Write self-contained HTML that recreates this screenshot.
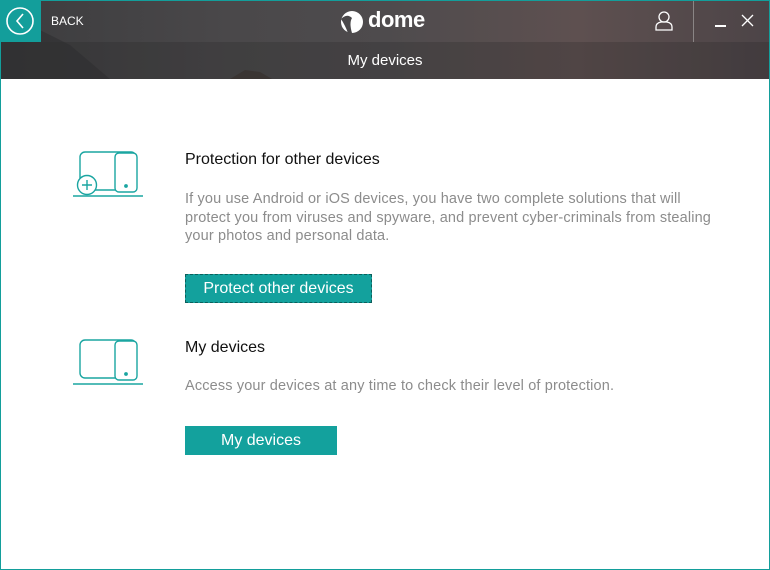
<!DOCTYPE html>
<html><head><meta charset="utf-8"><style>
*{margin:0;padding:0;box-sizing:border-box}
body{width:770px;height:570px;overflow:hidden;background:#fff;font-family:"Liberation Sans",sans-serif;position:relative}
.frame{position:absolute;left:0;top:0;width:770px;height:570px;border:1px solid #139e9b;pointer-events:none;z-index:5}
.hdr{position:absolute;left:0;top:0;width:770px;height:79px;background:linear-gradient(90deg,#3c3c3e 0%,#4a484a 30%,#4e4b4d 50%,#5e5050 75%,#4c4447 100%)}
.hdr .strip{position:absolute;left:0;top:42px;width:770px;height:37px;background:rgba(30,30,34,0.22)}
.back{position:absolute;left:0;top:0;width:41px;height:42px;background:#139e9b}
.t{position:absolute;color:#fff}
.card{position:absolute;left:185px}
h2{font-weight:normal;font-size:16px;color:#111}
p{font-size:14.5px;color:#8c8c8c;line-height:18.5px;letter-spacing:0.15px}
.btn{position:absolute;left:185px;background:#13a19d;color:#fff;font-size:16px;text-align:center;line-height:29px;height:29px}
</style></head><body>
<div class="hdr"><div class="strip"></div>
<svg style="position:absolute;left:0;top:30px" width="320" height="49"><path d="M0 49 L0 10 L40 0 L70 15 L110 49Z" fill="#2e2f30" opacity=".6"/><path d="M230 49 L245 40 L260 42 L272 49Z" fill="#3a3533"/></svg>
</div>
<div class="back"><svg width="41" height="42"><circle cx="20" cy="21" r="13" fill="none" stroke="#fff" stroke-width="1.6"/><path d="M23 14 L17 21 L23 28" fill="none" stroke="#fff" stroke-width="1.6"/></svg></div>
<div class="t" style="left:51px;top:14px;font-size:12px">BACK</div>
<svg style="position:absolute;left:339px;top:9px" width="28" height="26"><circle cx="13" cy="13" r="11" fill="#fff"/><path d="M2 10 Q8 4 13 9 Q10 14 13 24 L9 24 Q6 16 2 10Z" fill="#4a484a"/></svg>
<div class="t" style="left:368px;top:7px;font-size:22px;font-weight:bold;letter-spacing:-0.5px">dome</div>
<svg style="position:absolute;left:653px;top:10px" width="22" height="22"><circle cx="11" cy="7" r="5" fill="none" stroke="#fff" stroke-width="1.3"/><path d="M3 20 L3 17 Q3 13 8 12 L14 12 Q19 13 19 17 L19 20Z" fill="none" stroke="#fff" stroke-width="1.3"/></svg>
<div style="position:absolute;left:693px;top:0;width:1px;height:42px;background:#8a8585"></div>
<div style="position:absolute;left:715px;top:25px;width:11px;height:1.5px;background:#fff"></div>
<svg style="position:absolute;left:741px;top:14px" width="13" height="13"><path d="M1 1L12 12M12 1L1 12" stroke="#fff" stroke-width="1.3"/></svg>
<div class="t" style="left:0;width:770px;text-align:center;top:52px;font-size:15px">My devices</div>

<svg style="position:absolute;left:70px;top:148px" width="76" height="52" fill="none" stroke="#1aa5a1" stroke-width="1.4">
<rect x="10" y="4" width="56" height="38" rx="5"/><rect x="45" y="5" width="22" height="39" rx="4" fill="#fff"/><circle cx="56" cy="38" r="1.2" fill="#1aa5a1"/>
<line x1="3" y1="48" x2="73" y2="48"/><circle cx="17" cy="37" r="9.5" fill="#fff"/><path d="M17 32v10M12 37h10"/></svg>
<svg style="position:absolute;left:70px;top:336px" width="76" height="52" fill="none" stroke="#1aa5a1" stroke-width="1.4">
<rect x="10" y="4" width="56" height="38" rx="5"/><rect x="45" y="5" width="22" height="39" rx="4" fill="#fff"/><circle cx="56" cy="38" r="1.2" fill="#1aa5a1"/>
<line x1="3" y1="48" x2="73" y2="48"/></svg>

<div class="card" style="top:151px"><h2>Protection for other devices</h2></div>
<div class="card" style="top:190px;width:545px"><p>If you use Android or iOS devices, you have two complete solutions that will protect you from viruses and spyware, and prevent cyber-criminals from stealing your photos and personal data.</p></div>
<div class="btn" style="top:274px;width:187px;outline:1px dashed #0b5f5c;outline-offset:-1px">Protect other devices</div>
<div class="card" style="top:339px"><h2>My devices</h2></div>
<div class="card" style="top:377px"><p>Access your devices at any time to check their level of protection.</p></div>
<div class="btn" style="top:426px;width:152px">My devices</div>
<div class="frame"></div>
</body></html>
